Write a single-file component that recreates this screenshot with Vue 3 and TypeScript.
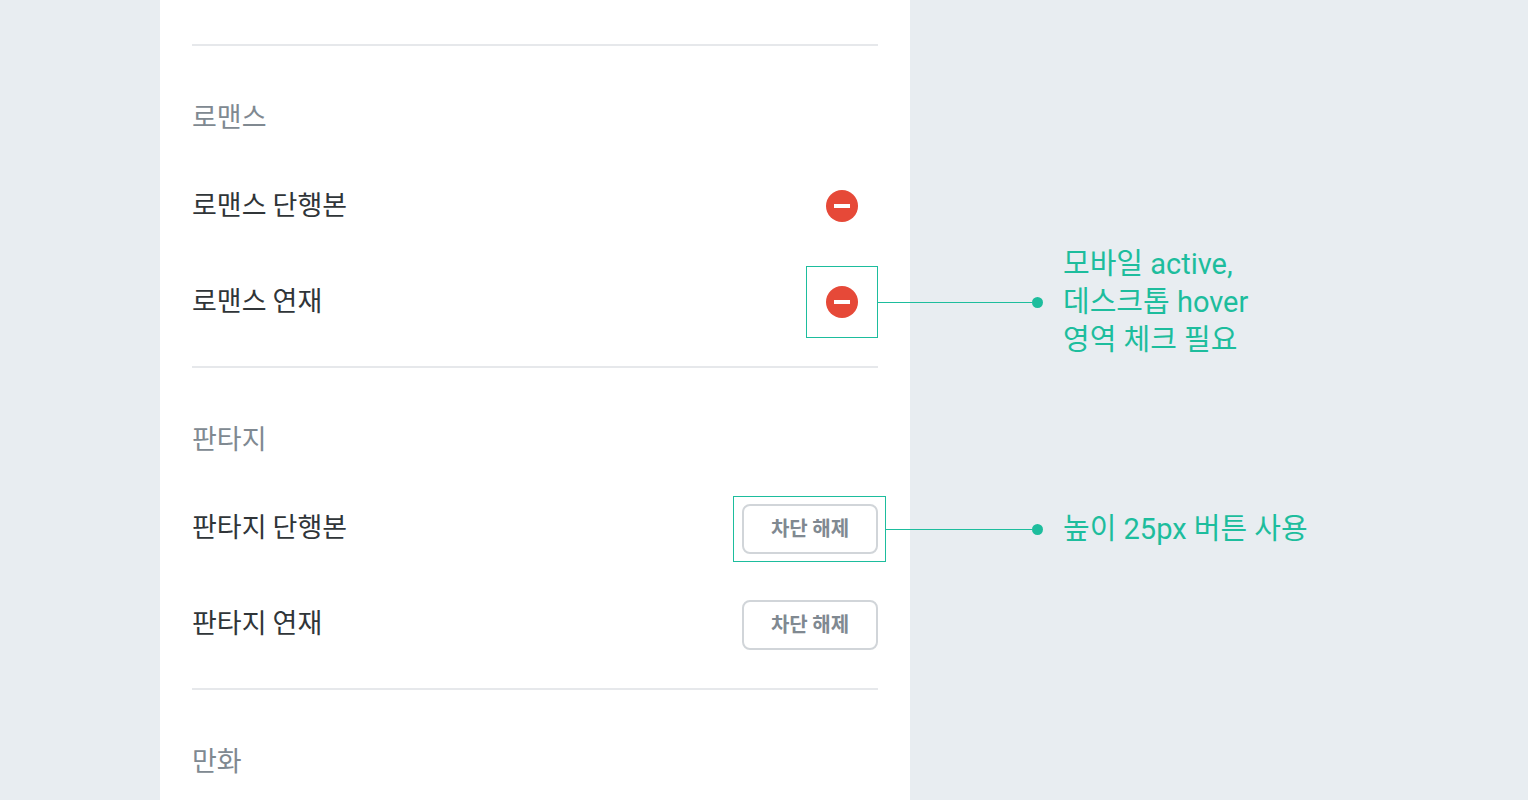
<script setup lang="ts">
interface Item {
  name: string
  action: 'remove' | 'unblock'
  note?: string[]
}

interface Section {
  title: string
  items: Item[]
}

const sections: Section[] = [
  {
    title: '로맨스',
    items: [
      { name: '로맨스 단행본', action: 'remove' },
      { name: '로맨스 연재', action: 'remove', note: ['모바일 active,', '데스크톱 hover', '영역 체크 필요'] },
    ],
  },
  {
    title: '판타지',
    items: [
      { name: '판타지 단행본', action: 'unblock', note: ['높이 25px 버튼 사용'] },
      { name: '판타지 연재', action: 'unblock' },
    ],
  },
  { title: '만화', items: [] },
]
</script>

<template>
  <div class="page">
    <main class="panel">
      <section v-for="section in sections" :key="section.title" class="section">
        <h2 class="title">{{ section.title }}</h2>
        <ul v-if="section.items.length" class="list">
          <li v-for="item in section.items" :key="item.name" class="row">
            <span class="name">{{ item.name }}</span>
            <div class="action" :class="item.action">
              <button v-if="item.action === 'remove'" type="button" class="remove-button" :aria-label="item.name + ' 차단'">
                <svg width="32" height="32" viewBox="0 0 32 32" aria-hidden="true">
                  <circle cx="16" cy="16" r="16" fill="#e64938" />
                  <rect x="8" y="14" width="16" height="4" fill="#fff" />
                </svg>
              </button>
              <button v-else type="button" class="unblock-button">차단 해제</button>
              <div v-if="item.note" class="outline">
                <div class="note">
                  <span class="line"></span>
                  <span class="dot"></span>
                  <p class="note-text">
                    <span v-for="text in item.note" :key="text" class="note-line">{{ text }}</span>
                  </p>
                </div>
              </div>
            </div>
          </li>
        </ul>
      </section>
    </main>
  </div>
</template>

<style>
body {
  margin: 0;
  background: #e8edf1;
}
</style>

<style scoped>
.page {
  display: flex;
  box-sizing: border-box;
  height: 100vh;
  overflow: hidden;
  padding-left: 160px;
  background: #e8edf1;
  font-family: "Noto Sans CJK KR", sans-serif;
}

.panel {
  box-sizing: border-box;
  flex: 0 1 750px;
  padding: 44px 32px 0;
  background: #fff;
}

.section {
  padding-bottom: 16px;
  border-top: 2px solid #e6e8eb;
}

.title {
  margin: 0;
  padding: 50px 0 22px;
  color: #808991;
  font-size: 27px;
  font-weight: 400;
  line-height: 40px;
}

.list {
  margin: 0;
  padding: 0;
  list-style: none;
}

.row {
  display: flex;
  align-items: center;
  justify-content: space-between;
  height: 96px;
}

.name {
  color: #303538;
  font-size: 27px;
  line-height: 40px;
  padding-bottom: 4px;
}

.action {
  position: relative;
  display: flex;
}

.unblock {
  align-self: flex-start;
  margin-top: 24px;
}

.remove-button {
  display: flex;
  align-items: center;
  justify-content: center;
  width: 72px;
  height: 72px;
  padding: 0;
  border: 0;
  background: none;
}

.unblock-button {
  box-sizing: border-box;
  width: 136px;
  height: 50px;
  padding: 0 0 4px;
  border: 2px solid #d1d5d9;
  border-radius: 8px;
  background: #fff;
  color: #808991;
  font-family: inherit;
  font-size: 20px;
  font-weight: 700;
}

.outline {
  position: absolute;
  inset: 0;
  box-sizing: border-box;
  border: 1px solid #1dbd9d;
  pointer-events: none;
}

.unblock .outline {
  inset: -8px -8px -8px -9px;
}

.note {
  position: absolute;
  top: 50%;
  left: 100%;
  display: flex;
  align-items: center;
  height: 1px;
  color: #1dbd9d;
}

.line {
  width: 155px;
  height: 1px;
  background: currentColor;
}

.unblock .line {
  width: 147px;
}

.dot {
  width: 11px;
  height: 11px;
  border-radius: 50%;
  background: currentColor;
}

.note-text {
  margin: 0 0 0 20px;
  padding-bottom: 2px;
  font-family: Roboto, "Noto Sans CJK KR", sans-serif;
  font-size: 29px;
  line-height: 38px;
  white-space: nowrap;
}

.note-line {
  display: block;
}
</style>
